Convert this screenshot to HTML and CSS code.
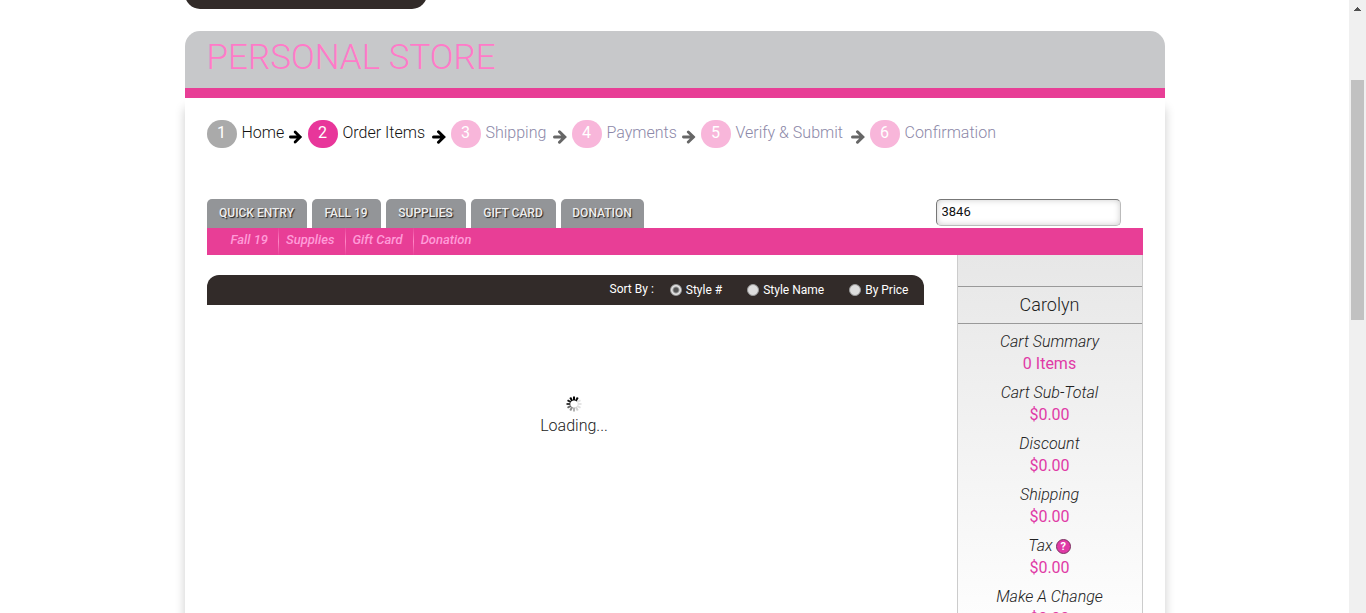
FILE: index.html
```html
<!DOCTYPE html>
<html lang="en">
<head>
<meta charset="utf-8">
<title>Personal Store</title>
<link rel="stylesheet" href="styles.css">
</head>
<body>
<svg class="defs" width="0" height="0" aria-hidden="true">
  <symbol id="arrow" viewBox="0 0 14 14"><path d="M1.5 7H11M6.5 1.8 11.8 7 6.5 12.2" fill="none" stroke="currentColor" stroke-width="3" stroke-linecap="round" stroke-linejoin="miter"/></symbol>
</svg>
<div class="window">
  <div class="page">
    <div class="topbar"></div>
    <main class="store">
      <h1 class="title">Personal Store</h1>
      <div class="body">
        <ol class="steps">
          <li class="step done"><span class="num">1</span><a href="#">Home</a><svg class="arrow"><use href="#arrow"/></svg></li>
          <li class="step current"><span class="num">2</span><a href="#">Order Items</a><svg class="arrow"><use href="#arrow"/></svg></li>
          <li class="step"><span class="num">3</span><a href="#">Shipping</a><svg class="arrow"><use href="#arrow"/></svg></li>
          <li class="step"><span class="num">4</span><a href="#">Payments</a><svg class="arrow"><use href="#arrow"/></svg></li>
          <li class="step"><span class="num">5</span><a href="#">Verify &amp; Submit</a><svg class="arrow"><use href="#arrow"/></svg></li>
          <li class="step"><span class="num">6</span><a href="#">Confirmation</a></li>
        </ol>
        <div class="toolbar">
          <nav class="tabs">
            <a href="#">QUICK ENTRY</a><a href="#">FALL 19</a><a href="#">SUPPLIES</a><a href="#">GIFT CARD</a><a href="#">DONATION</a>
          </nav>
          <input class="search" type="text" value="3846" aria-label="Search">
        </div>
        <nav class="subnav">
          <a href="#">Fall 19</a><a href="#">Supplies</a><a href="#">Gift Card</a><a href="#">Donation</a>
        </nav>
        <div class="columns">
          <section class="items">
            <div class="sort">
              <span>Sort By :</span>
              <label><input type="radio" name="sort" checked>Style #</label>
              <label><input type="radio" name="sort">Style Name</label>
              <label><input type="radio" name="sort">By Price</label>
            </div>
            <div class="loading">
              <svg width="16" height="16" viewBox="-8 -8 16 16" stroke-width="2">
                <g stroke="#000">
                  <path d="M0-3.6V-7.5"/>
                  <path d="M0-3.6V-7.5" transform="rotate(30)" opacity=".95"/>
                  <path d="M0-3.6V-7.5" transform="rotate(60)" opacity=".1"/>
                  <path d="M0-3.6V-7.5" transform="rotate(90)" opacity=".1"/>
                  <path d="M0-3.6V-7.5" transform="rotate(120)" opacity=".12"/>
                  <path d="M0-3.6V-7.5" transform="rotate(150)" opacity=".18"/>
                  <path d="M0-3.6V-7.5" transform="rotate(180)" opacity=".3"/>
                  <path d="M0-3.6V-7.5" transform="rotate(210)" opacity=".45"/>
                  <path d="M0-3.6V-7.5" transform="rotate(240)" opacity=".6"/>
                  <path d="M0-3.6V-7.5" transform="rotate(270)" opacity=".75"/>
                  <path d="M0-3.6V-7.5" transform="rotate(300)" opacity=".9"/>
                  <path d="M0-3.6V-7.5" transform="rotate(330)"/>
                </g>
              </svg>
              <span>Loading...</span>
            </div>
          </section>
          <aside class="cart">
            <div class="cart-top"></div>
            <h2>Carolyn</h2>
            <dl>
              <div><dt>Cart Summary</dt><dd>0 Items</dd></div>
              <div><dt>Cart Sub-Total</dt><dd>$0.00</dd></div>
              <div><dt>Discount</dt><dd>$0.00</dd></div>
              <div><dt>Shipping</dt><dd>$0.00</dd></div>
              <div><dt class="with-help">Tax <button class="help" type="button" aria-label="Tax help">?</button></dt><dd>$0.00</dd></div>
              <div><dt>Make A Change</dt><dd>$0.00</dd></div>
            </dl>
          </aside>
        </div>
      </div>
    </main>
  </div>
  <div class="scrollbar">
    <svg width="17" height="17"><path d="M5 11h7v-1h-1V9h-1V8H9V7H8v1H7v1H6v1H5z" fill="#505050"/></svg>
    <div class="track"><div class="thumb"></div></div>
    <svg width="17" height="17"><path d="M5 7h7v1h-1v1h-1v1H9v1H8v-1H7V9H6V8H5z" fill="#505050"/></svg>
  </div>
</div>
</body>
</html>
```
FILE: styles.css
```css
* { box-sizing: border-box; }
body {
  margin: 0;
  background: #fff;
  color: #222;
  font: 300 16px/20px Roboto, "Liberation Sans", sans-serif;
}
a { color: inherit; text-decoration: none; }
.defs { display: block; }
.window {
  display: grid;
  grid-template-columns: minmax(0, 1fr) 17px;
  height: 100vh;
  overflow: hidden;
}
.page { padding: 0 24px; }
.topbar {
  display: flex;
  align-items: flex-end;
  max-width: 980px;
  height: 9px;
  margin: 0 auto 22px;
}
.topbar::before {
  content: "";
  width: 242px;
  height: 30px;
  background: #322b29;
  border-radius: 0 0 15px 15px;
}
.store { max-width: 980px; margin: 0 auto; }
.title {
  margin: 0;
  padding: 5px 22px 8px;
  background: #c7c8ca;
  border-bottom: 10px solid #e83e96;
  border-radius: 15px 15px 0 0;
  color: #ff7ac8;
  font-size: 35px;
  font-weight: 300;
  line-height: 44px;
  text-transform: uppercase;
}
.body {
  padding: 22px 22px 0;
  box-shadow: 0 10px 10px rgba(0, 0, 0, .2);
}
.steps {
  display: grid;
  grid-template-columns: 101px 143px 121px 129px 169px auto;
  justify-content: start;
  margin: 0 0 51px;
  padding: 0;
  list-style: none;
}
.step {
  display: flex;
  align-items: flex-start;
  gap: 5px;
  padding-right: 5px;
  color: #8c88a8;
  line-height: 26px;
  white-space: nowrap;
}
.step.done, .step.current { color: #111; }
.num {
  flex: none;
  width: 30px;
  height: 28px;
  border-radius: 14px;
  background: #f8b6da;
  color: #fff;
  font-weight: 400;
  text-align: center;
}
.done .num { background: #aaa; }
.current .num { background: #e8369a; }
.arrow {
  width: 14px;
  height: 14px;
  margin: 10px 0 0 auto;
  color: #666;
}
.done .arrow, .current .arrow { color: #000; }
.toolbar {
  display: flex;
  justify-content: space-between;
  padding-right: 22px;
}
.tabs { display: grid; grid-template-columns: 100px 69px 80px 85px 83px; gap: 5px; }
.tabs a {
  height: 29px;
  border-radius: 5px 5px 0 0;
  background: #939598;
  color: #eee;
  font-size: 12px;
  font-weight: 500;
  line-height: 28px;
  text-align: center;
  text-shadow: 1px 1px 1px #222;
}
.search {
  width: 185px;
  height: 27px;
  padding: 0 5px 2px;
  border: 1px solid;
  border-color: #777 #bbb #bbb #777;
  border-radius: 5px;
  background: #fff;
  box-shadow: inset 0 0 6px #ccc;
  color: #111;
  font: 400 13px/20px Roboto, "Liberation Sans", sans-serif;
}
.subnav {
  display: flex;
  height: 27px;
  padding-left: 17px;
  background: #e83e96;
  color: #ff9bd8;
  font-size: 13px;
  font-style: italic;
  font-weight: 500;
  line-height: 24px;
}
.subnav a { padding: 0 10px 0 7px; }
.subnav a + a {
  border-left: 1px solid;
  border-image: linear-gradient(#e83e96, #ff87c6, #e83e96) 1;
}
.columns {
  display: grid;
  grid-template-columns: minmax(0, 1fr) 186px;
  gap: 33px;
}
.items { padding-top: 20px; }
.sort {
  display: flex;
  justify-content: flex-end;
  height: 30px;
  padding-right: 15px;
  border-radius: 12px 12px 0 0;
  background: #322b29;
  color: #fff;
  font-size: 12px;
  font-weight: 400;
  line-height: 28px;
}
.sort span { margin-right: 16px; }
.sort label { display: flex; align-items: center; gap: 4px; }
.sort label + label { margin-left: 25px; }
.sort input {
  appearance: none;
  width: 12px;
  height: 12px;
  margin: 0;
  border: 1px solid #999;
  border-radius: 50%;
  background: #ddd;
}
.sort input:checked { background: radial-gradient(circle, #555 0 2px, #e5e5e5 4px); }
.loading {
  display: flex;
  flex-direction: column;
  align-items: center;
  gap: 4px;
  padding: 91px 0 0 18px;
}
.cart {
  min-height: 400px;
  border: solid #ccc;
  border-width: 0 1px;
  background: linear-gradient(#e7e7e7, #fdfdfd 360px);
  text-align: center;
}
.cart-top { height: 31px; }
.cart h2 {
  margin: 0;
  border: solid #999;
  border-width: 1px 0;
  font-size: 18px;
  font-weight: 300;
  line-height: 36px;
}
.cart dl { display: grid; gap: 7px; margin: 0; padding-top: 7px; }
.cart dt { font-style: italic; line-height: 22px; }
.cart dd { margin: 0; color: #e03aa6; font-weight: 400; line-height: 22px; }
.cart .with-help { display: flex; align-items: center; justify-content: center; gap: 3px; }
.help {
  width: 15px;
  height: 15px;
  padding: 0;
  border: 1px solid #7c3463;
  border-radius: 50%;
  background: #e03aa6;
  color: #fff;
  font: 700 11px/13px Roboto, "Liberation Sans", sans-serif;
  text-align: center;
}
.scrollbar { display: flex; flex-direction: column; background: #f0f0f0; }
.scrollbar svg { display: block; flex: none; }
.track { flex: 1; padding: 63px 2px 0; }
.thumb { height: 240px; background: #c1c1c1; }
```
